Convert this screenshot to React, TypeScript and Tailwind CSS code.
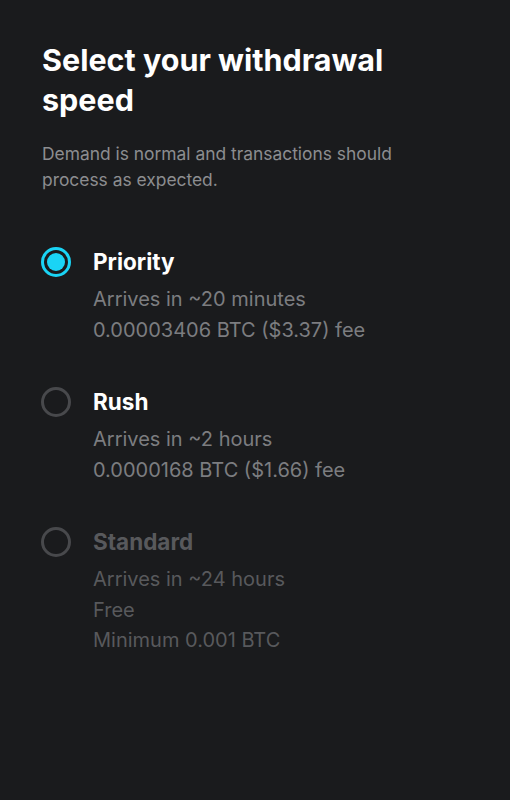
import React from "react";

type Opt = { name: string; lines: string[]; state: "selected" | "normal" | "disabled" };

const options: Opt[] = [
  { name: "Priority", lines: ["Arrives in ~20 minutes", "0.00003406 BTC ($3.37) fee"], state: "selected" },
  { name: "Rush", lines: ["Arrives in ~2 hours", "0.0000168 BTC ($1.66) fee"], state: "normal" },
  { name: "Standard", lines: ["Arrives in ~24 hours", "Free", "Minimum 0.001 BTC"], state: "disabled" },
];

function Radio({ state }: { state: Opt["state"] }) {
  if (state === "selected") {
    return (
      <div className="w-[30px] h-[30px] rounded-full border-[3px] border-[#1ad4f5] flex items-center justify-center">
        <div className="w-[18px] h-[18px] rounded-full bg-[#1ad4f5]" />
      </div>
    );
  }
  return <div className="w-[30px] h-[30px] rounded-full border-[3px] border-[#48494c]" />;
}

export default function App() {
  return (
    <div
      className="w-[510px] h-[800px] bg-[#1a1b1d] px-[42px] pt-[40px]"
      style={{ fontFamily: "Inter, 'Open Sans', sans-serif" }}
    >
      <h1 className="w-[400px] text-[30.5px] leading-[40px] font-bold text-white">
        Select your withdrawal speed
      </h1>
      <p className="mt-[21px] w-[400px] text-[17.4px] leading-[26px] text-[#8c8d90]">
        Demand is normal and transactions should process as expected.
      </p>
      <div className="mt-[53px] flex flex-col gap-[41px]">
        {options.map((o) => (
          <div key={o.name} className="flex gap-[22px]">
            <div className="-ml-[1px] pt-[1px]">
              <Radio state={o.state} />
            </div>
            <div className="flex flex-col">
              <div
                className={`text-[22.5px] leading-[32px] font-bold ${
                  o.state === "disabled" ? "text-[#58595c]" : "text-white"
                }`}
              >
                {o.name}
              </div>
              <div className="mt-[6px] flex flex-col">
                {o.lines.map((l) => (
                  <div
                    key={l}
                    className={`text-[20px] leading-[30.5px] ${
                      o.state === "disabled" ? "text-[#58595c]" : "text-[#7c7d80]"
                    }`}
                  >
                    {l}
                  </div>
                ))}
              </div>
            </div>
          </div>
        ))}
      </div>
    </div>
  );
}
